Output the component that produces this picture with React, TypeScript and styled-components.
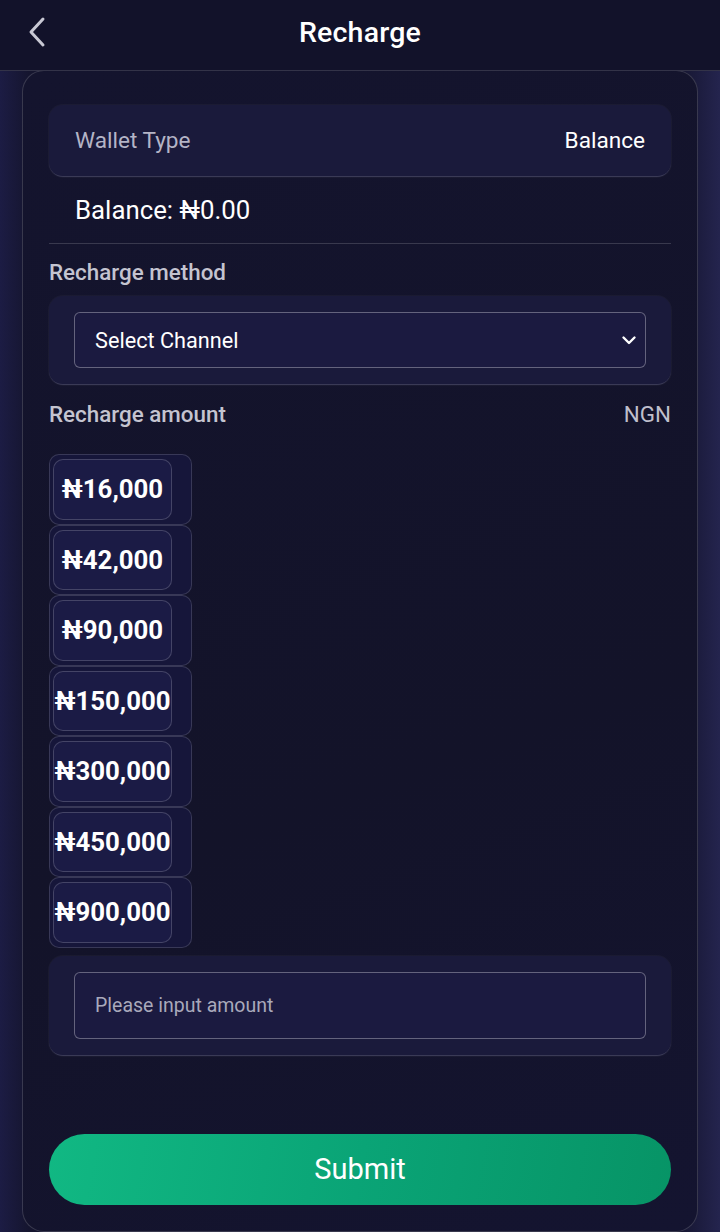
import React from 'react'
import styled, { createGlobalStyle } from 'styled-components'

const Global = createGlobalStyle`
  html, body {
    margin: 0;
    padding: 0;
    background: #16163a;
  }
  body {
    font-family: Roboto, "Noto Sans", sans-serif;
    color: #fff;
  }
  * { box-sizing: border-box; }
`

const Page = styled.div`
  width: 720px;
  height: 1232px;
  overflow: hidden;
  background: linear-gradient(90deg, #1c1c44 0%, #15152f 4%, #15152f 94%, #24244e 100%);
  display: flex;
  flex-direction: column;
`

const Header = styled.header`
  height: 71px;
  flex-shrink: 0;
  background: #12122a;
  border-bottom: 1px solid rgba(255, 255, 255, 0.14);
  display: flex;
  align-items: center;
  justify-content: center;
  position: relative;
`

const Back = styled.button`
  position: absolute;
  left: 20px;
  top: 14px;
  width: 32px;
  height: 36px;
  padding: 0;
  border: none;
  background: none;
  display: flex;
  align-items: center;
  justify-content: center;
`

const Title = styled.h1`
  margin: -6px 0 0;
  font-size: 28.5px;
  font-weight: 500;
  letter-spacing: 0.2px;
`

const Card = styled.main`
  margin: -1px 22px 0 22px;
  flex: 1;
  border: 1px solid rgba(255, 255, 255, 0.16);
  border-radius: 22px;
  background: linear-gradient(160deg, #14142e 0%, #131329 60%, #141430 100%);
  padding: 34px 26px 0 26px;
  display: flex;
  flex-direction: column;
`

const Panel = styled.div<{ $pad?: string }>`
  background: #1a1a3b;
  border-radius: 14px;
  border-bottom: 1px solid rgba(255, 255, 255, 0.14);
  box-shadow: 0 0 0 1px rgba(255, 255, 255, 0.03);
  padding: ${p => p.$pad || '0'};
`

const WalletRow = styled(Panel)`
  height: 72px;
  display: flex;
  align-items: center;
  justify-content: space-between;
  padding: 0 26px;
  font-size: 22.6px;
`

const Muted = styled.span`
  color: #b4b4c6;
`

const BalanceLine = styled.div`
  height: 67px;
  padding: 0 26px;
  display: flex;
  align-items: center;
  font-size: 25.8px;
  border-bottom: 1px solid rgba(255, 255, 255, 0.16);
`

const Label = styled.div<{ $top: number }>`
  display: flex;
  justify-content: space-between;
  align-items: center;
  margin-top: ${p => p.$top}px;
  height: 26px;
  font-size: 22.4px;
  font-weight: 500;
  color: #c4c4d0;
`

const Unit = styled.span`
  font-weight: 400;
  color: #bfbfcc;
`

const FieldBox = styled.div<{ $h: number }>`
  height: ${p => p.$h}px;
  border: 1px solid rgba(255, 255, 255, 0.32);
  border-radius: 6px;
  background: #1b1a40;
  display: flex;
  align-items: center;
  justify-content: space-between;
  padding: 0 7px 0 20px;
`

const SelectText = styled.span`
  font-size: 21.7px;
  color: #fff;
`

const Placeholder = styled.span`
  font-size: 19.5px;
  color: #a9a9bb;
`

const AmountList = styled.div`
  margin-top: 27px;
  display: flex;
  flex-direction: column;
  align-items: flex-start;
`

const AmountOuter = styled.div`
  width: 143px;
  height: 70.5px;
  border: 1px solid rgba(255, 255, 255, 0.15);
  border-radius: 10px;
  padding: 4px 19px 4px 3px;
  background: #16163a;
`

const AmountInner = styled.div`
  width: 119px;
  height: 100%;
  border: 1px solid rgba(255, 255, 255, 0.18);
  border-radius: 10px;
  background: #1b1b45;
  display: flex;
  align-items: center;
  justify-content: center;
  font-size: 25.8px;
  font-weight: 700;
  white-space: nowrap;
  overflow: visible;
`

const Submit = styled.button`
  margin-top: 78px;
  height: 71px;
  border: none;
  border-radius: 36px;
  background: linear-gradient(100deg, #11b883 0%, #0aa476 50%, #079466 100%);
  color: #fff;
  font-family: Roboto, sans-serif;
  font-size: 29px;
  font-weight: 400;
`

const amounts = ['₦16,000', '₦42,000', '₦90,000', '₦150,000', '₦300,000', '₦450,000', '₦900,000']

const App = () => (
  <>
    <Global />
    <Page>
      <Header>
        <Back aria-label="Back">
          <svg width="20" height="32" viewBox="0 0 20 32" fill="none">
            <path d="M17 3 L5 16 L17 29" stroke="#c8c8d4" strokeWidth="3" strokeLinecap="round" strokeLinejoin="round" />
          </svg>
        </Back>
        <Title>Recharge</Title>
      </Header>
      <Card>
        <WalletRow>
          <Muted>Wallet Type</Muted>
          <span>Balance</span>
        </WalletRow>
        <BalanceLine>Balance: ₦0.00</BalanceLine>
        <Label $top={15}>Recharge method</Label>
        <Panel $pad="16px 25px" style={{ marginTop: 11 }}>
          <FieldBox $h={56}>
            <SelectText>Select Channel</SelectText>
            <svg width="18" height="12" viewBox="0 0 18 12" fill="none">
              <path d="M3.5 3.5 L9 9 L14.5 3.5" stroke="#fff" strokeWidth="2.4" strokeLinecap="round" strokeLinejoin="round" />
            </svg>
          </FieldBox>
        </Panel>
        <Label $top={16}>
          <span>Recharge amount</span>
          <Unit>NGN</Unit>
        </Label>
        <AmountList>
          {amounts.map(a => (
            <AmountOuter key={a}>
              <AmountInner>{a}</AmountInner>
            </AmountOuter>
          ))}
        </AmountList>
        <Panel $pad="16px 25px" style={{ marginTop: 8 }}>
          <FieldBox $h={67}>
            <Placeholder>Please input amount</Placeholder>
          </FieldBox>
        </Panel>
        <Submit>Submit</Submit>
      </Card>
    </Page>
  </>
)

export default App
